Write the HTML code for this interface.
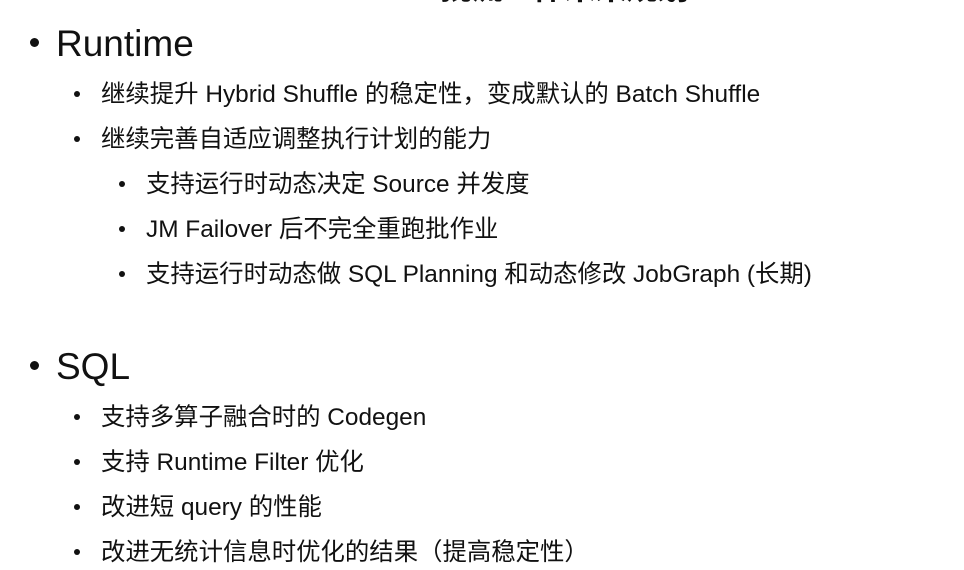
<!DOCTYPE html>
<html><head><meta charset="utf-8"><style>
body{margin:0;width:964px;height:570px;background:#fff;position:relative;overflow:hidden;font-family:"Liberation Sans","Noto Sans CJK SC",sans-serif;color:#111}
.t{position:absolute;white-space:nowrap;line-height:1}
.l1{font-size:37px}
.l2{font-size:24.4px}
.b{position:absolute;border-radius:50%;background:#111}
</style></head><body>
<div class="t" style="left:440px;top:-28px;font-size:32px;font-weight:bold;letter-spacing:-1px">批流一体未来规划</div>

<div class="b" style="left:30px;top:38px;width:9px;height:9px"></div>
<div class="t l1" style="left:56px;top:25px">Runtime</div>

<div class="b" style="left:74px;top:91px;width:6px;height:6px"></div>
<div class="t l2" style="left:101px;top:83px">继续提升 Hybrid Shuffle 的稳定性，变成默认的 Batch Shuffle</div>
<div class="b" style="left:74px;top:136px;width:6px;height:6px"></div>
<div class="t l2" style="left:101px;top:128px">继续完善自适应调整执行计划的能力</div>

<div class="b" style="left:119px;top:181px;width:6px;height:6px"></div>
<div class="t l2" style="left:146px;top:173px">支持运行时动态决定 Source 并发度</div>
<div class="b" style="left:119px;top:226px;width:6px;height:6px"></div>
<div class="t l2" style="left:146px;top:218px">JM Failover 后不完全重跑批作业</div>
<div class="b" style="left:119px;top:271px;width:6px;height:6px"></div>
<div class="t l2" style="left:146px;top:263px">支持运行时动态做 SQL Planning 和动态修改 JobGraph (长期)</div>

<div class="b" style="left:30px;top:361px;width:9px;height:9px"></div>
<div class="t l1" style="left:56px;top:348px">SQL</div>

<div class="b" style="left:74px;top:414px;width:6px;height:6px"></div>
<div class="t l2" style="left:101px;top:406px">支持多算子融合时的 Codegen</div>
<div class="b" style="left:74px;top:459px;width:6px;height:6px"></div>
<div class="t l2" style="left:101px;top:451px">支持 Runtime Filter 优化</div>
<div class="b" style="left:74px;top:504px;width:6px;height:6px"></div>
<div class="t l2" style="left:101px;top:496px">改进短 query 的性能</div>
<div class="b" style="left:74px;top:549px;width:6px;height:6px"></div>
<div class="t l2" style="left:101px;top:541px">改进无统计信息时优化的结果（提高稳定性）</div>
</body></html>
